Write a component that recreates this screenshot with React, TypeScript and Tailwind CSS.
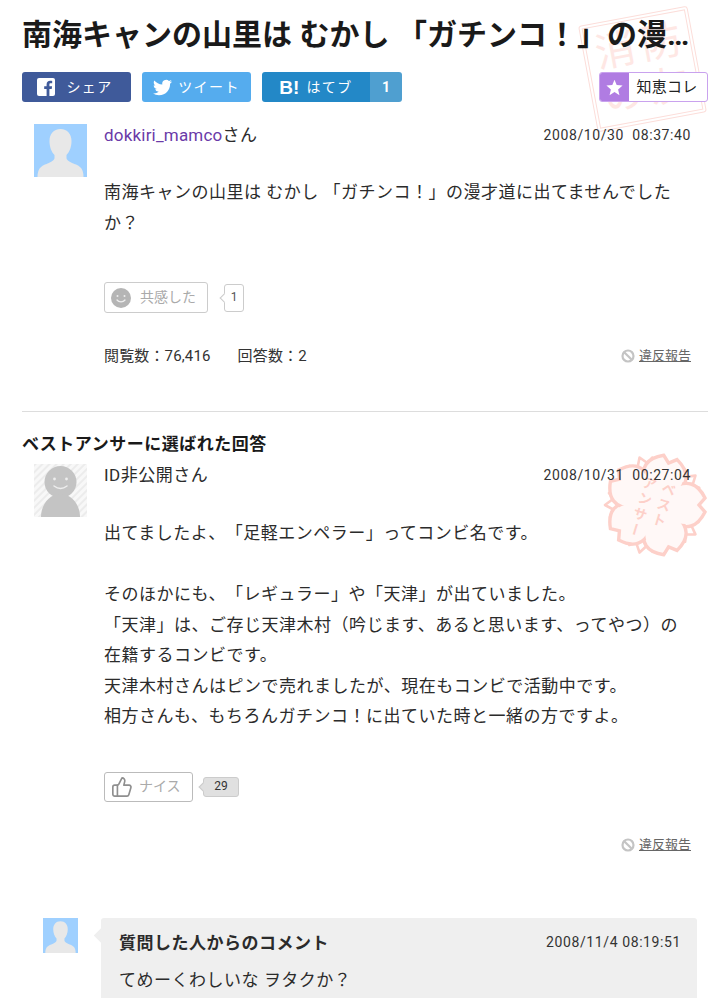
import { ThumbsUp } from 'lucide-react';

const petalAngles = [18, 90, 162, 234, 306];

function Silhouette({ size }: { size: string }) {
  return (
    <svg viewBox="0 0 53 53" className={`${size} shrink-0 bg-[#9fd0ff]`}>
      <path
        d="M26.5 5c-7 0-11 5-11 12 0 6 2 11 5 14v3c0 2-3 4-8 6-6 2-9 5-9 13h46c0-8-3-11-9-13-5-2-8-4-8-6v-3c3-3 5-8 5-14 0-7-4-12-11-12z"
        fill="#e8e8e8"
      />
    </svg>
  );
}

function AnonymousAvatar() {
  return (
    <svg viewBox="0 0 53 53" className="h-[53px] w-[53px] shrink-0">
      <defs>
        <pattern id="stripes" width="5" height="5" patternUnits="userSpaceOnUse" patternTransform="rotate(-45)">
          <rect width="5" height="5" fill="#f8f8f8" />
          <rect width="5" height="2" fill="#ececec" />
        </pattern>
      </defs>
      <rect width="53" height="53" fill="url(#stripes)" />
      <circle cx="26.5" cy="18" r="16" fill="#c4c4c4" />
      <path d="M7 53c0-12 8-23 19.5-23S46 41 46 53z" fill="#c4c4c4" />
      <circle cx="20.5" cy="15" r="1.4" fill="#eee" />
      <circle cx="32.5" cy="15" r="1.4" fill="#eee" />
      <path d="M20 22c4 3 9 3 13 0" fill="none" stroke="#eee" strokeWidth="1.5" strokeLinecap="round" />
    </svg>
  );
}

function SakuraStamp() {
  return (
    <div className="absolute left-[602px] top-[452px] h-[106px] w-[106px]">
      <svg viewBox="-53 -53 106 106" className="h-full w-full">
        {petalAngles.map((angle) => (
          <path
            key={`zig${angle}`}
            transform={`rotate(${angle + 36})`}
            d="M-14 -34L-12 -45L-5 -41L0 -50L6 -42L12 -46L14 -34z"
            fill="#fff"
            stroke="#fdd0c9"
            strokeWidth="2.6"
            strokeLinejoin="round"
          />
        ))}
        {petalAngles.map((angle) => (
          <path
            key={angle}
            transform={`rotate(${angle})`}
            d="M0 0C-10 -8 -25 -22 -21 -36C-19 -43 -13 -47 -7 -50L0 -44L7 -50C13 -47 19 -43 21 -36C25 -22 10 -8 0 0z"
            fill="#fff8f7"
            stroke="#fdd0c9"
            strokeWidth="3.4"
          />
        ))}
        {petalAngles.map((angle) => (
          <path
            key={`in${angle}`}
            transform={`rotate(${angle})`}
            d="M0 -4C-9 -10 -22 -22 -18.500 -35C-17 -41 -12 -44 -7 -46.500L0 -41L7 -46.500C12 -44 17 -41 18.500 -35C22 -22 9 -10 0 -4z"
            fill="#fff8f7"
          />
        ))}
        <circle r="24" fill="#fff8f7" />
      </svg>
      <div className="absolute inset-0 flex rotate-[17deg] items-center justify-center pr-[6px] pt-[12px] text-[14px] font-bold leading-[15px] tracking-[2px] text-[#fdd0c9]">
        <div className="flex flex-col items-start gap-[5px] [writing-mode:vertical-rl]">
          <span>ベスト</span>
          <span>アンサー</span>
        </div>
      </div>
    </div>
  );
}

function ReportLink() {
  return (
    <div className="flex items-center justify-end gap-[4px] text-[13px] tracking-normal text-[#666]">
      <svg viewBox="0 0 14 14" className="h-[14px] w-[14px]">
        <circle cx="7" cy="7" r="5.5" fill="none" stroke="#c4c4c4" strokeWidth="2.2" />
        <path d="M3.2 3.2l7.6 7.6" stroke="#c4c4c4" strokeWidth="2.2" />
      </svg>
      <span className="underline">違反報告</span>
    </div>
  );
}

function Count({ value, active }: { value: string; active?: boolean }) {
  return (
    <div
      className={`relative flex items-center justify-center rounded-[3px] border border-[#ccc] text-[12px] tracking-normal ${
        active ? 'ml-[10px] h-[20px] w-[36px] bg-[#e0e0e0] text-[#333]' : 'ml-[16px] h-[28px] w-[20px] bg-white text-[#555]'
      }`}
    >
      <span
        className={`absolute left-[-4px] top-1/2 h-[7px] w-[7px] -translate-y-1/2 rotate-45 border-b border-l border-[#ccc] ${
          active ? 'bg-[#e0e0e0]' : 'bg-white'
        }`}
      />
      <span className="relative">{value}</span>
    </div>
  );
}

export default function App() {
  return (
    <div className="relative h-[998px] w-[720px] overflow-hidden bg-white font-['Roboto','Noto_Sans_CJK_JP',sans-serif] text-[#2b2b2b] [text-spacing-trim:space-all]">
      {/* Stamps */}
      <div className="absolute left-[587px] top-[15px] h-[108px] w-[111px] rotate-[-10.5deg] rounded-[3px] border-[4px] border-double border-[#fcdeda] p-[5px]">
        <div className="grid h-full w-full grid-cols-2 place-items-center text-[40px] leading-none text-[#fee7e4]">
          <span>消</span>
          <span>防</span>
          <span>の</span>
          <span>友</span>
        </div>
      </div>
      <SakuraStamp />

      <div className="relative pl-[22px] pr-[12px]">
        <h1 className="truncate pt-[13px] text-[30px] font-bold leading-[43px] text-[#1a1a1a]">
          南海キャンの山里は むかし 「ガチンコ！」の漫才道に出てませんでしたか？
        </h1>

        {/* Share buttons */}
        <div className="mt-[16px] flex h-[30px] items-stretch text-[14px] tracking-[1.4px] text-white">
          <div className="flex w-[109px] items-center justify-center gap-[11px] rounded-[3px] bg-[#3f5a9a] pr-[3px]">
            <svg viewBox="0 0 18 18" className="h-[18px] w-[18px]">
              <rect width="18" height="18" rx="2" fill="#fff" />
              <path d="M12.4 18v-7h2.3l.4-2.7h-2.7V6.6c0-.8.2-1.3 1.3-1.3h1.5V2.9c-.3 0-1.1-.1-2.1-.1-2.1 0-3.5 1.3-3.5 3.6v1.9H7.2V11h2.4v7z" fill="#3f5a9a" />
            </svg>
            シェア
          </div>
          <div className="ml-[11px] flex w-[109px] items-center justify-center gap-[6px] rounded-[3px] bg-[#55acee]">
            <svg viewBox="0 0 24 24" className="h-[19px] w-[19px]" fill="#fff">
              <path d="M23.95 4.57a10 10 0 0 1-2.82.77 4.96 4.96 0 0 0 2.16-2.72c-.95.55-2 .96-3.12 1.19a4.92 4.92 0 0 0-8.38 4.48C7.69 8.1 4.07 6.13 1.64 3.16a4.82 4.82 0 0 0-.67 2.47c0 1.71.87 3.21 2.19 4.1a4.9 4.9 0 0 1-2.23-.62v.06a4.92 4.92 0 0 0 3.95 4.83 5 5 0 0 1-2.21.08 4.94 4.94 0 0 0 4.6 3.42A9.87 9.87 0 0 1 0 19.54a14 14 0 0 0 7.56 2.21c9.05 0 14-7.5 14-13.98 0-.21 0-.42-.02-.63a9.94 9.94 0 0 0 2.46-2.55z" />
            </svg>
            ツイート
          </div>
          <div className="ml-[11px] flex w-[140px] overflow-hidden rounded-[3px]">
            <div className="flex flex-1 items-center justify-center gap-[7px] bg-[#2388c7]">
              <span className="font-['Liberation_Sans',sans-serif] text-[19px] font-bold leading-none tracking-normal">B!</span>
              はてブ
            </div>
            <div className="flex w-[32px] items-center justify-center bg-[#4f9fd0] text-[14px] font-bold tracking-normal">1</div>
          </div>
          <div className="ml-auto flex w-[109px] overflow-hidden rounded-[3px] border border-[#c9a2ee] bg-white text-[15px] tracking-[0.3px] text-[#222]">
            <div className="flex w-[29px] items-center justify-center bg-[#b07ce2]">
              <svg viewBox="0 0 24 24" className="h-[17px] w-[17px]" fill="#fff">
                <polygon points="12,1 15.1,8.6 23.4,9.3 17.1,14.7 19,22.8 12,18.5 5,22.8 6.9,14.7 0.6,9.3 8.9,8.6" />
              </svg>
            </div>
            <span className="flex flex-1 items-center justify-center pr-[2px]">知恵コレ</span>
          </div>
        </div>

        {/* Question */}
        <div className="mt-[22px] flex pl-[12px] pr-[17px]">
          <Silhouette size="h-[53px] w-[53px]" />
          <div className="ml-[17px] min-w-0 flex-1 text-[17px] leading-[30.5px] tracking-[0.5px]">
            <div className="flex items-center justify-between leading-[22px]">
              <span>
                <span className="tracking-[0.2px] text-[#6a3aa8]">dokkiri_mamco</span>さん
              </span>
              <span className="text-[14px] tracking-[0.6px] text-[#333]">2008/10/30&nbsp;&nbsp;08:37:40</span>
            </div>
            <p className="mt-[31px]">南海キャンの山里は むかし 「ガチンコ！」の漫才道に出てませんでしたか？</p>
            <div className="mt-[44px] flex items-center">
              <div className="flex h-[31px] w-[104px] items-center gap-[9px] rounded-[3px] border border-[#ccc] pl-[6px] text-[14px] tracking-normal text-[#aaa]">
                <svg viewBox="0 0 20 20" className="h-[20px] w-[20px]">
                  <circle cx="10" cy="10" r="10" fill="#b5b5b5" />
                  <circle cx="6.5" cy="8" r="1" fill="#eee" />
                  <circle cx="13.5" cy="8" r="1" fill="#eee" />
                  <path d="M6 12c2 2.5 6 2.5 8 0" fill="none" stroke="#eee" strokeWidth="1.3" strokeLinecap="round" />
                </svg>
                共感した
              </div>
              <Count value="1" />
            </div>
            <div className="mt-[28px] flex items-center justify-between text-[15px] leading-[30px] tracking-[0.15px] text-[#333]">
              <div className="flex gap-[27px]">
                <span>閲覧数：76,416</span>
                <span>回答数：2</span>
              </div>
              <ReportLink />
            </div>
          </div>
        </div>

        <div className="mt-[40px] border-t border-[#ddd]" />

        {/* Best answer */}
        <h2 className="mt-[20px] text-[17px] font-bold leading-[24px] tracking-[0.5px] text-[#1a1a1a]">ベストアンサーに選ばれた回答</h2>
        <div className="mt-[8px] flex pl-[12px] pr-[17px]">
          <AnonymousAvatar />
          <div className="ml-[17px] min-w-0 flex-1 text-[17px] leading-[30.5px] tracking-[0.5px]">
            <div className="flex items-center justify-between leading-[22px]">
              <span>ID非公開さん</span>
              <span className="text-[14px] tracking-[0.6px] text-[#333]">2008/10/31&nbsp;&nbsp;00:27:04</span>
            </div>
            <p className="mt-[32px]">
              出てましたよ、「足軽エンペラー」ってコンビ名です。
              <br />
              <br />
              そのほかにも、「レギュラー」や「天津」が出ていました。
              <br />
              「天津」は、ご存じ天津木村（吟じます、あると思います、ってやつ）の在籍するコンビです。
              <br />
              天津木村さんはピンで売れましたが、現在もコンビで活動中です。
              <br />
              相方さんも、もちろんガチンコ！に出ていた時と一緒の方ですよ。
            </p>
            <div className="mt-[40px] flex items-center">
              <div className="flex h-[30px] w-[89px] items-center gap-[6px] rounded-[3px] border border-[#bbb] pl-[6px] text-[14px] tracking-normal text-[#aaa]">
                <ThumbsUp size={22} strokeWidth={1.8} className="text-[#8f8f8f]" />
                ナイス
              </div>
              <Count value="29" active />
            </div>
            <div className="mt-[28px] leading-[30px]">
              <ReportLink />
            </div>
          </div>
        </div>

        {/* Comment */}
        <div className="mt-[58px] flex pl-[21px] pr-[11px]">
          <Silhouette size="h-[35px] w-[35px]" />
          <div className="relative ml-[23px] flex-1 rounded-[3px] bg-[#efefef] pl-[18px] pr-[16px] pt-[12px] pb-[16px]">
            <span className="absolute left-[-5px] top-[12px] h-[11px] w-[11px] rotate-45 bg-[#efefef]" />
            <div className="flex items-center justify-between">
              <span className="text-[17px] font-bold leading-[26px] tracking-[0.5px]">質問した人からのコメント</span>
              <span className="text-[14px] tracking-[0.6px] text-[#333]">2008/11/4 08:19:51</span>
            </div>
            <p className="mt-[9px] text-[17px] leading-[30px] tracking-[0.5px]">てめーくわしいな ヲタクか？</p>
          </div>
        </div>
      </div>
    </div>
  );
}
